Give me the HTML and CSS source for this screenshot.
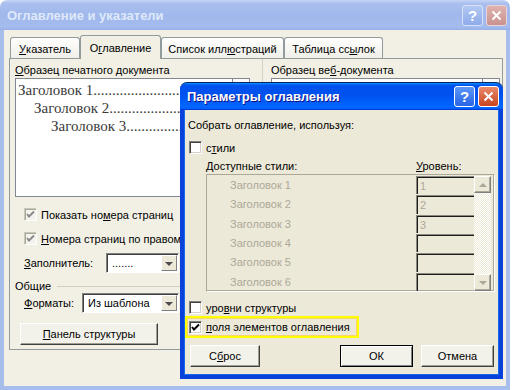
FILE: index.html
```html
<!DOCTYPE html>
<html lang="ru">

<head>
  <meta charset="UTF-8">
  <title>Оглавление и указатели</title>
  <link rel="stylesheet" href="styles.css">
</head>

<body>

  <div class="screen">

    <!-- главное окно (неактивное) -->
    <div class="win back">
      <div class="titlebar">
        <span class="title">Оглавление и указатели</span>
        <span class="tbtn help">?</span>
        <span class="tbtn close">
          <svg width="11" height="11" viewBox="0 0 11 11"><path d="M1.5 1.5 L9.5 9.5 M9.5 1.5 L1.5 9.5" stroke="#fff" stroke-width="2" /></svg>
        </span>
      </div>

      <div class="frame">
        <div class="tabs">
          <span class="tab t1"><u>У</u>казатель</span>
          <span class="tab t2 active">О<u>г</u>лавление</span>
          <span class="tab t3">Список илл<u>ю</u>страций</span>
          <span class="tab t4">Таблица сс<u>ы</u>лок</span>
        </div>

        <div class="page">
          <div class="col left">
            <div class="label"><u>О</u>бразец печатного документа</div>
            <div class="preview">
              <div class="lines">
                <div class="pl l1">Заголовок 1....................................</div>
                <div class="pl l2">Заголовок 2................................</div>
                <div class="pl l3">Заголовок 3...........................</div>
              </div>
              <div class="vscroll"></div>
            </div>

            <div class="check-row r1">
              <span class="cb dim"><svg width="11" height="11" viewBox="0 0 11 11"><path d="M2 5 L4 7.5 L9 2.5" fill="none" stroke="#8a8a8a" stroke-width="2" /></svg></span>
              <span>Показать но<u>м</u>ера страниц</span>
            </div>
            <div class="check-row r2">
              <span class="cb dim"><svg width="11" height="11" viewBox="0 0 11 11"><path d="M2 5 L4 7.5 L9 2.5" fill="none" stroke="#8a8a8a" stroke-width="2" /></svg></span>
              <span><u>Н</u>омера страниц по правому краю</span>
            </div>

            <div class="field-row fill">
              <span class="flabel"><u>З</u>аполнитель:</span>
              <span class="combo c-fill">
                <span class="cval">.......</span>
                <span class="carrow"><i></i></span>
              </span>
            </div>

            <div class="group">
              <span>Общие</span>
              <span class="gline"></span>
            </div>

            <div class="field-row formats">
              <span class="flabel"><u>Ф</u>орматы:</span>
              <span class="combo c-fmt">
                <span class="cval">Из шаблона</span>
                <span class="carrow"><i></i></span>
              </span>
            </div>

            <div class="btn outline-btn"><u>П</u>анель структуры</div>
          </div>

          <div class="col right">
            <div class="label">Образец ве<u>б</u>-документа</div>
            <div class="preview web">
              <div class="lines"></div>
              <div class="vscroll"></div>
            </div>
          </div>
        </div>
      </div>
    </div>

    <!-- диалог поверх окна -->
    <div class="win front">
      <div class="titlebar">
        <span class="title">Параметры оглавления</span>
        <span class="tbtn help">?</span>
        <span class="tbtn close">
          <svg width="11" height="11" viewBox="0 0 11 11"><path d="M1.5 1.5 L9.5 9.5 M9.5 1.5 L1.5 9.5" stroke="#fff" stroke-width="2" /></svg>
        </span>
      </div>

      <div class="frame">
        <div class="label">Собрать оглавление, используя:</div>

        <div class="check-row styles-cb">
          <span class="cb"></span>
          <span>с<u>т</u>или</span>
        </div>

        <div class="list-head">
          <span class="h-name">Доступные стили:</span>
          <span><u>У</u>ровень:</span>
        </div>

        <div class="style-box">
          <div class="style-list">
            <div class="srow h19"><span class="sname">Заголовок 1</span><span class="lvl">1</span></div>
            <div class="srow h20"><span class="sname">Заголовок 2</span><span class="lvl">2</span></div>
            <div class="srow h19"><span class="sname">Заголовок 3</span><span class="lvl">3</span></div>
            <div class="srow h19"><span class="sname">Заголовок 4</span><span class="lvl"></span></div>
            <div class="srow h20"><span class="sname">Заголовок 5</span><span class="lvl"></span></div>
            <div class="srow h19"><span class="sname">Заголовок 6</span><span class="lvl"></span></div>
          </div>
          <div class="sbar">
            <span class="sbtn"><i class="up"></i></span>
            <span class="strack"></span>
            <span class="sbtn"><i class="down"></i></span>
          </div>
        </div>

        <div class="check-row outline-cb">
          <span class="cb"></span>
          <span>уро<u>в</u>ни структуры</span>
        </div>

        <div class="highlight">
          <span class="cb"><svg width="11" height="11" viewBox="0 0 11 11"><path d="M2 5 L4 7.5 L9 2.5" fill="none" stroke="#000" stroke-width="2" /></svg></span>
          <span><u>п</u>оля элементов оглавления</span>
        </div>

        <div class="buttons">
          <span class="btn reset">С<u>б</u>рос</span>
          <span class="spacer"></span>
          <span class="btn ok">ОК</span>
          <span class="btn cancel">Отмена</span>
        </div>
      </div>
    </div>

  </div>

</body>

</html>
```

FILE: styles.css
```css
/* общие настройки */
body {
  margin: 0;
  background: #fff;
  font-family: "Liberation Sans", Arial, sans-serif;
  font-size: 11px;
  color: #000;
}

.screen {
  position: relative;
  width: 513px;
  height: 390px;
  overflow: hidden;
}

u {
  text-decoration: underline;
  text-underline-offset: 1px;
}

/* окна */
.win {
  display: flex;
  flex-direction: column;
  box-sizing: border-box;
}

.titlebar {
  display: flex;
  align-items: center;
  gap: 3px;
  border-radius: 7px 7px 0 0;
  box-sizing: border-box;
}

.title {
  flex: 1;
  font-weight: bold;
  font-size: 13px;
  white-space: nowrap;
}

.tbtn {
  width: 21px;
  height: 21px;
  box-sizing: border-box;
  border: 1px solid #fff;
  border-radius: 3px;
  display: flex;
  align-items: center;
  justify-content: center;
  color: #fff;
  font-weight: bold;
  font-size: 15px;
  line-height: 1;
}

/* главное окно */
.back {
  width: 510px;
  height: 390px;
}

.back .titlebar {
  height: 30px;
  padding: 0 3px 0 7px;
  background: linear-gradient(#c6d5f5 0, #a9bfee 12%, #a0b8ec 50%, #a4bbed 90%, #97afe7 100%);
}

.back .title {
  color: #dfe8f9;
}

.back .help {
  background: linear-gradient(#b3c8f3, #8eabea);
  border-color: #d7e2f8;
}

.back .close {
  background: linear-gradient(#dfb2ad, #c9938f);
  border-color: #e8d4dc;
}

.back .frame {
  flex: 1;
  background: #f2f0e5;
  border: solid #a7bdec;
  border-width: 0 4px 4px;
  padding: 5px 0 0 5px;
}

/* вкладки */
.tabs {
  display: flex;
  align-items: flex-end;
  height: 23px;
  padding-left: 1px;
}

.tab {
  box-sizing: border-box;
  height: 21px;
  border: 1px solid #919b9c;
  border-bottom: 0;
  border-radius: 3px 3px 0 0;
  background: linear-gradient(#fefefe, #f0efe8);
  display: flex;
  align-items: center;
  justify-content: center;
  padding-top: 1px;
  white-space: nowrap;
}

.t1 { width: 70px; }
.t2 { width: 81px; }
.t3 { width: 123px; }
.t4 { width: 99px; }

.tab.active {
  height: 24px;
  margin-bottom: -1px;
  position: relative;
  background: #f2f0e5;
  padding-top: 0;
}

.page {
  box-sizing: border-box;
  width: 494px;
  height: 292px;
  border: 1px solid #919b9c;
  display: flex;
}

.col.left {
  width: 247px;
  padding-left: 5px;
  border-right: 1px solid #d6d3c4;
}

.col.right {
  padding-left: 8px;
}

.label {
  height: 14px;
  line-height: 14px;
  margin-top: 4px;
  white-space: nowrap;
}

.preview {
  display: flex;
  width: 235px;
  height: 119px;
  margin-top: 1px;
  box-sizing: border-box;
  border: 1px solid #828790;
  background: #fff;
}

.preview.web {
  width: 229px;
}

.lines {
  flex: 1;
  padding-top: 2px;
  border-right: 1px solid #828790;
}

.pl {
  font-family: "Liberation Serif", "Times New Roman", serif;
  font-size: 15px;
  line-height: 18px;
  color: #3a3a3a;
  white-space: nowrap;
}

.l1 { padding-left: 2px; }
.l2 { padding-left: 18px; }
.l3 { padding-left: 35px; }

.vscroll {
  width: 16px;
  background: #fbfbf9;
}

/* флажки */
.check-row {
  display: flex;
  align-items: center;
  gap: 4px;
  height: 13px;
  white-space: nowrap;
}

.cb {
  box-sizing: border-box;
  width: 13px;
  height: 13px;
  flex: none;
  background: #fff;
  border: 1px solid;
  border-color: #808080 #fff #fff #808080;
  box-shadow: inset 1px 1px 0 #404040, inset -1px -1px 0 #d4d0c8;
  display: flex;
  align-items: center;
  justify-content: center;
}

.cb.dim {
  background: #f4f3ee;
  border-color: #c9c7ba #fff #fff #c9c7ba;
  box-shadow: inset 1px 1px 0 #aca899;
}

.left .r1 {
  margin: 11px 0 0 9px;
}

.left .r2 {
  margin: 11px 0 0 9px;
}

/* поля со списком */
.field-row {
  display: flex;
  align-items: center;
  height: 20px;
  padding-left: 9px;
}

.field-row.fill {
  margin-top: 8px;
}

.flabel {
  white-space: nowrap;
}

.fill .flabel {
  width: 82px;
}

.formats .flabel {
  width: 58px;
}

.combo {
  box-sizing: border-box;
  height: 20px;
  display: flex;
  border: 1px solid;
  border-color: #808080 #fff #fff #808080;
  box-shadow: inset 1px 1px 0 #404040;
  background: #fff;
}

.c-fill {
  width: 73px;
}

.c-fmt {
  width: 97px;
}

.cval {
  flex: 1;
  padding: 1px 0 0 5px;
  line-height: 17px;
  white-space: nowrap;
  overflow: hidden;
}

.carrow {
  width: 16px;
  box-sizing: border-box;
  margin: 1px 1px 1px 0;
  background: #ece9d8;
  border: 1px solid;
  border-color: #fff #808080 #808080 #fff;
  display: flex;
  align-items: center;
  justify-content: center;
}

.carrow i {
  border: 4px solid transparent;
  border-top: 4px solid #4d4d4d;
  border-bottom: 0;
  width: 0;
  height: 0;
  margin-top: 1px;
}

.group {
  display: flex;
  align-items: center;
  gap: 6px;
  height: 14px;
  margin-top: 6px;
}

.gline {
  flex: 1;
  border-top: 1px solid #d0d0bf;
}

/* кнопки */
.btn {
  box-sizing: border-box;
  height: 22px;
  display: flex;
  align-items: center;
  justify-content: center;
  background: #f3f2ea;
  border: 1px solid;
  border-color: #fff #404040 #404040 #fff;
  box-shadow: inset -1px -1px 0 #a09e92;
  white-space: nowrap;
}

.outline-btn {
  width: 138px;
  margin: 10px 0 0 5px;
}

/* диалог параметров */
.front {
  position: absolute;
  left: 180px;
  top: 82px;
  width: 323px;
}

.front .titlebar {
  height: 28px;
  padding: 0 4px 0 7px;
  background: linear-gradient(#0997ff 0%, #0053ee 8%, #0050ee 40%, #0066ff 88%, #0066ff 93%, #005bff 95%, #003dd7 96%, #003dd7 100%);
  border-top: 1px solid #0a246a;
}

.front .title {
  color: #fff;
  text-shadow: 1px 1px 0 #0f1089;
}

.front .help {
  background: linear-gradient(#5d97f8, #2864e6);
}

.front .close {
  background: linear-gradient(#e98a6d, #c8441f);
}

.front .frame {
  box-sizing: border-box;
  height: 269px;
  background: #ece9d8;
  border: solid #0842db;
  border-width: 0 4px 4px;
  box-shadow: inset 1px 0 0 #166aee, inset -1px 0 0 #166aee, inset 0 -1px 0 #166aee;
  padding: 8px 5px 0 4px;
  display: flex;
  flex-direction: column;
}

.front .frame > .label {
  margin-top: 0;
}

.styles-cb {
  margin: 9px 0 0 1px;
}

.list-head {
  display: flex;
  height: 14px;
  line-height: 14px;
  margin: 5px 0 0 18px;
}

.h-name {
  width: 210px;
}

.style-box {
  display: flex;
  width: 289px;
  height: 118px;
  box-sizing: border-box;
  margin: 1px 0 0 18px;
  padding: 1px 3px 0 0;
  border: 1px solid;
  border-color: #aca899 #fff #fff #aca899;
  box-shadow: inset -1px -1px 0 #aca899;
}

.style-list {
  flex: 1;
}

.srow {
  display: flex;
  align-items: stretch;
  color: #aca899;
}

.h19 { height: 19px; }
.h20 { height: 20px; }

.sname {
  flex: 1;
  padding-left: 23px;
  line-height: 19px;
}

.lvl {
  width: 58px;
  box-sizing: border-box;
  margin-bottom: 1px;
  border-top: 1px solid #8c8a80;
  border-left: 1px solid #8c8a80;
  box-shadow: inset 1px 1px 0 #1c1c1c;
  padding: 2px 0 0 3px;
  line-height: 15px;
}

.sbar {
  width: 17px;
  display: flex;
  flex-direction: column;
}

.sbtn {
  height: 17px;
  box-sizing: border-box;
  background: #ece9d8;
  border: 1px solid;
  border-color: #fff #808080 #808080 #fff;
  box-shadow: inset -1px -1px 0 #aca899;
  display: flex;
  align-items: center;
  justify-content: center;
}

.sbtn i {
  width: 0;
  height: 0;
  border: 4px solid transparent;
}

.sbtn i.up {
  border-bottom: 4px solid #aca899;
  border-top: 0;
}

.sbtn i.down {
  border-top: 4px solid #aca899;
  border-bottom: 0;
}

.strack {
  flex: 1;
  background: repeating-conic-gradient(#fff 0 25%, #ece9d8 0 50%) 0 0 / 2px 2px;
}

.outline-cb {
  margin: 9px 0 0 1px;
}

.highlight {
  box-sizing: border-box;
  display: flex;
  align-items: center;
  gap: 4px;
  width: 174px;
  height: 22px;
  margin: 2px 0 0 -3px;
  padding-left: 2px;
  border: 2px solid #ffff00;
  box-shadow: inset 0 0 0 1px #f8d66a;
  white-space: nowrap;
}

.buttons {
  display: flex;
  gap: 8px;
  margin: 7px 0 0 2px;
}

.spacer {
  flex: 1;
}

.reset {
  width: 70px;
}

.ok,
.cancel {
  width: 73px;
}

.ok {
  border-color: #000;
  box-shadow: inset 1px 1px 0 #fff, inset -1px -1px 0 #808080;
}
```
